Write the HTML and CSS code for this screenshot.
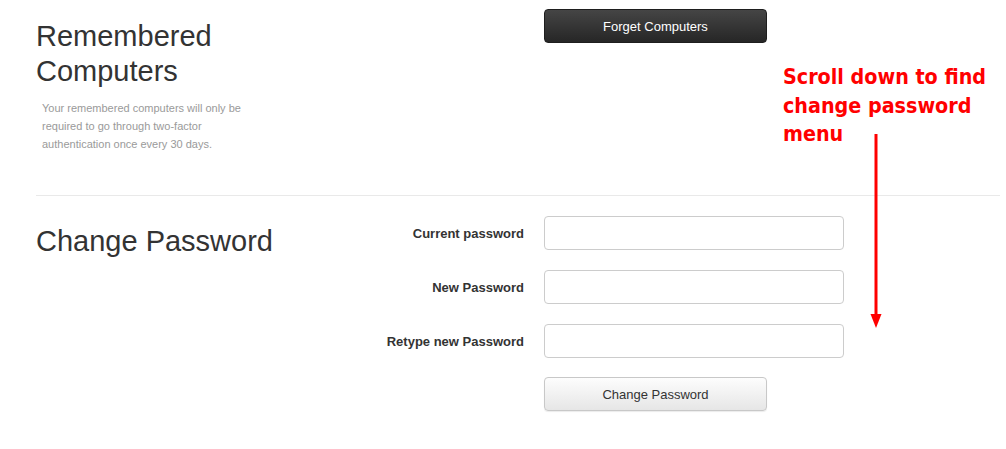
FILE: index.html
```html
<!DOCTYPE html>
<html lang="en">
<head>
    <meta charset="UTF-8">
    <meta name="viewport" content="width=device-width, initial-scale=1.0">
    <title>Account Settings</title>
    <link rel="stylesheet" href="styles.css">
</head>
<body>
    <div class="container">
        <div class="section remembered">
            <div class="side">
                <h2>Remembered Computers</h2>
                <p class="hint">Your remembered computers will only be required to go through two-factor authentication once every 30 days.</p>
            </div>
            <div class="main">
                <button class="btn btn-dark">Forget Computers</button>
            </div>
        </div>

        <hr class="divider">

        <div class="section password">
            <div class="side narrow">
                <h2>Change Password</h2>
            </div>
            <form class="pw-form" onsubmit="return false">
                <div class="form-row">
                    <label for="current">Current password</label>
                    <input type="password" id="current">
                </div>
                <div class="form-row">
                    <label for="newpw">New Password</label>
                    <input type="password" id="newpw">
                </div>
                <div class="form-row">
                    <label for="retype">Retype new Password</label>
                    <input type="password" id="retype">
                </div>
                <div class="form-row">
                    <span class="label-spacer"></span>
                    <button class="btn btn-light">Change Password</button>
                </div>
            </form>
        </div>

        <!-- annotation drawn over the page -->
        <div class="note">Scroll down to find<br>change password<br>menu</div>
        <svg class="arrow" width="14" height="196" viewBox="0 0 14 196">
            <line x1="7" y1="0" x2="7" y2="182" stroke="#ff0000" stroke-width="3"/>
            <polygon points="1.5,180 12.5,180 7,194" fill="#ff0000"/>
        </svg>
    </div>
</body>
</html>
```

FILE: styles.css
```css
body {
    font-family: "Liberation Sans", Arial, sans-serif;
    margin: 0;
    padding: 0;
    background-color: #fff;
    color: #333;
}
.container {
    position: relative;
    padding: 9px 6px 0 36px;
}
.section {
    display: flex;
}
.side {
    width: 508px;
}
.side.narrow {
    width: 330px;
}
h2 {
    font-size: 29px;
    font-weight: normal;
    line-height: 35px;
    margin: 0;
    color: #333;
    width: 260px;
}
.remembered h2 {
    margin-top: 10px;
}
.hint {
    font-size: 11px;
    line-height: 18px;
    color: #9a9a9a;
    margin: 10px 0 0 6px;
    width: 210px;
}
.divider {
    border: none;
    border-top: 1px solid #e9e9e9;
    margin: 42px 0 0 0;
}
.password {
    padding-top: 20px;
}
.password h2 {
    margin-top: 8px;
}
.form-row {
    display: flex;
    align-items: center;
    margin-bottom: 20px;
}
.form-row label,
.label-spacer {
    width: 158px;
    margin-right: 20px;
    text-align: right;
    font-size: 13px;
    font-weight: bold;
    color: #333;
}
.form-row input {
    width: 300px;
    height: 34px;
    box-sizing: border-box;
    border: 1px solid #ccc;
    border-radius: 4px;
    padding: 6px 10px;
    font-size: 13px;
}
.form-row:last-child {
    margin-top: -1px;
}
.btn {
    width: 223px;
    height: 34px;
    border-radius: 4px;
    font-family: "Liberation Sans", Arial, sans-serif;
    font-size: 13px;
    cursor: pointer;
}
.btn-dark {
    color: #fff;
    border: 1px solid #1e1e1e;
    background: linear-gradient(#454545, #262626);
}
.btn-light {
    color: #333;
    border: 1px solid #c8c8c8;
    background: linear-gradient(#fdfdfd, #e6e6e6);
    box-shadow: 0 1px 1px rgba(0, 0, 0, 0.08);
}
.note {
    position: absolute;
    left: 783px;
    top: 63px;
    color: #ff0000;
    font-family: "DejaVu Sans Condensed", "DejaVu Sans", sans-serif;
    font-weight: bold;
    font-size: 21.3px;
    line-height: 28.5px;
}
.arrow {
    position: absolute;
    left: 869px;
    top: 134px;
}
```
